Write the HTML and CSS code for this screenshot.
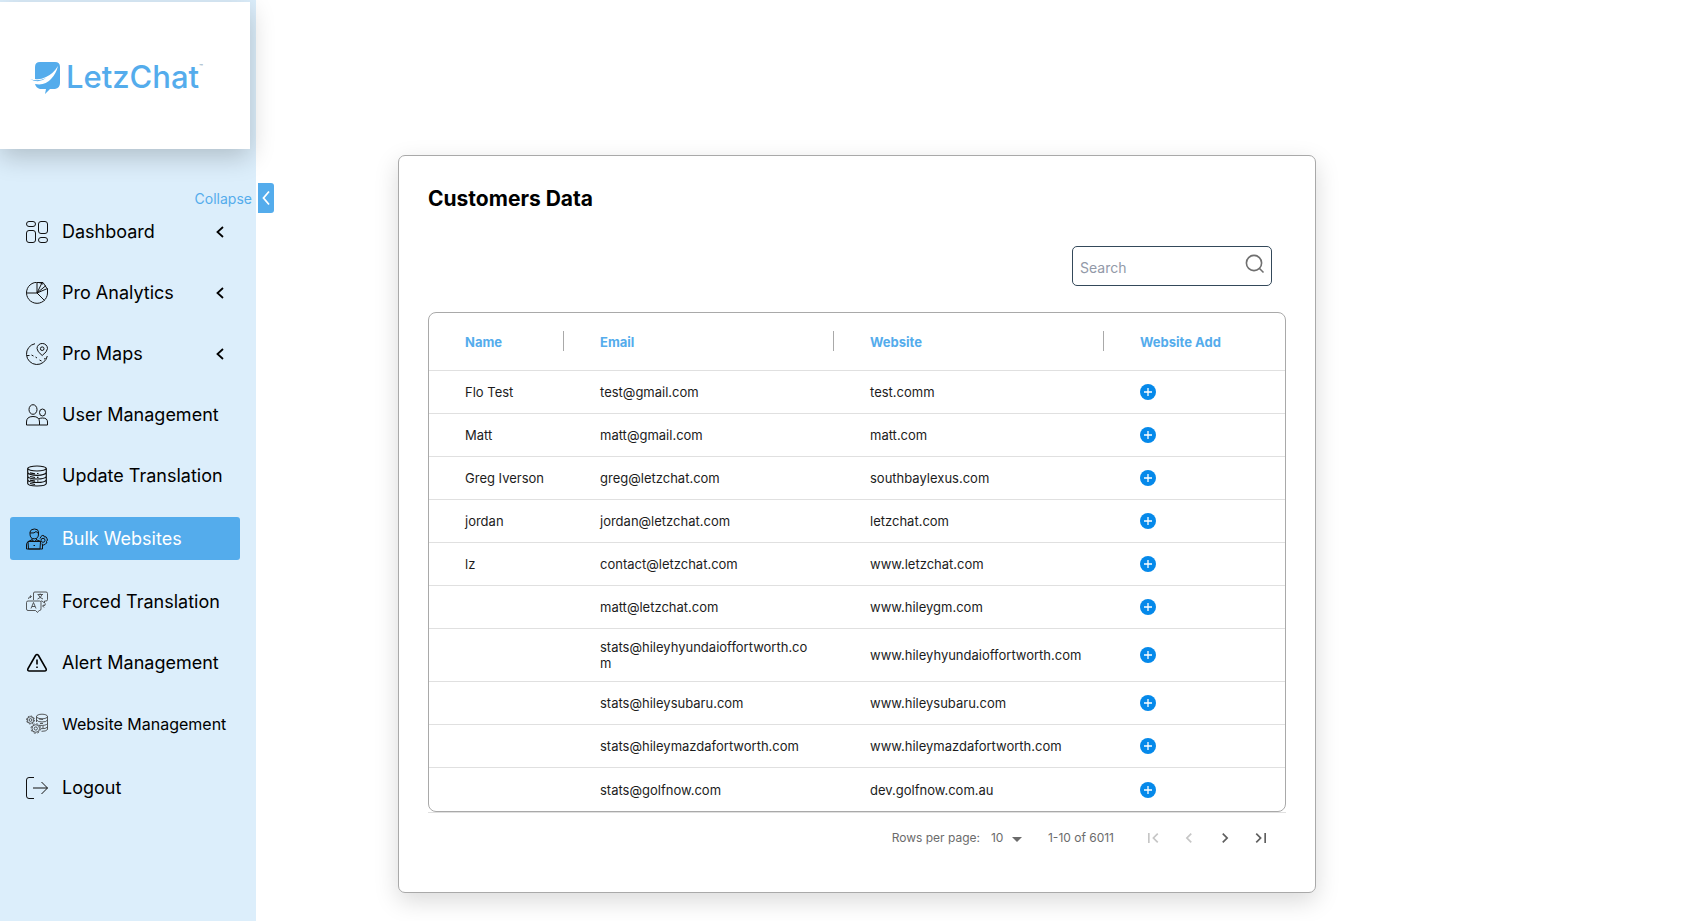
FILE: index.html
```html
<!DOCTYPE html>
<html lang="en">
<head>
    <meta charset="UTF-8">
    <meta name="viewport" content="width=device-width, initial-scale=1.0">
    <title>LetzChat - Customers Data</title>
    <link rel="stylesheet" href="styles.css">
</head>
<body>
    <aside class="sidebar">
        <div class="logo-box">
            <svg class="logo-mark" viewBox="0 0 31 33" aria-hidden="true">
                <path fill="#54acec" d="M10 0H25Q30 0 30 5V21Q30 26 25 27H20L15 32L16 27H10Q6 26 5 22Q15 24 21 17Q26 12 28 4Q23 12 16 15Q10 18 5 17V5Q5 0 10 0Z"/>
                <path fill="#54acec" d="M0 17Q8 20 16 16Q9 22 0 17Z"/>
            </svg>
            <span class="logo-text">LetzChat</span>
            <small class="logo-tm">™</small>
        </div>

        <div class="collapse-row">
            <span id="collapse-label">Collapse</span>
            <button class="btn-collapse" type="button" aria-labelledby="collapse-label">
                <svg viewBox="0 0 16 30" width="16" height="30"><path d="M11 8.500L5.500 15L11 21.500" fill="none" stroke="#fff" stroke-width="1.800"/></svg>
            </button>
        </div>

        <nav class="menu">
            <a href="#" class="menu-item">
                <svg class="menu-icon" viewBox="0 0 22 22">
                    <rect x=".5" y=".5" width="9" height="5" rx="2.500"/><rect x="12.500" y=".5" width="9" height="12" rx="2.500"/>
                    <rect x=".5" y="9.500" width="9" height="12" rx="2.500"/><rect x="12.500" y="16.500" width="9" height="5" rx="2.500"/>
                </svg>
                <span>Dashboard</span>
                <svg class="arrow" viewBox="0 0 8 12"><path d="M7 1L1.500 6L7 11"/></svg>
            </a>
            <a href="#" class="menu-item">
                <svg class="menu-icon" viewBox="0 0 22 22">
                    <path d="M17 2.200A10.500 10.500 0 1 0 21.500 11V6.500L11 11V.5H17L21 6.500M.5 11H11L18.500 18.500M11 11L16 .8M11 11L20 3.500"/>
                </svg>
                <span>Pro Analytics</span>
                <svg class="arrow" viewBox="0 0 8 12"><path d="M7 1L1.500 6L7 11"/></svg>
            </a>
            <a href="#" class="menu-item">
                <svg class="menu-icon" viewBox="0 0 22 22">
                    <path d="M9 .7A10.500 10.500 0 1 0 21.300 13"/>
                    <path d="M16.200 12.500Q11 8.500 11 5.500A5.200 5 0 0 1 21.500 5.500Q21.500 8.500 16.200 12.500Z"/>
                    <circle cx="16.200" cy="5.700" r="1.800"/>
                    <path d="M1 12.500H3.500M5.500 12L7.500 13M9.500 14L11 15M13.500 17L15.500 18M18 16L19.500 15.500"/>
                </svg>
                <span>Pro Maps</span>
                <svg class="arrow" viewBox="0 0 8 12"><path d="M7 1L1.500 6L7 11"/></svg>
            </a>
            <a href="#" class="menu-item">
                <svg class="menu-icon" viewBox="0 0 22 22">
                    <ellipse cx="7" cy="5.500" rx="4" ry="4.800"/><ellipse cx="16.500" cy="8.500" rx="3" ry="3.500"/>
                    <path d="M.5 21V18Q.5 12.500 7 12.500Q13.500 12.500 13.500 18V21ZM13 14.800Q14.500 14 16.500 14Q21.500 14 21.500 18V21H13.500"/>
                </svg>
                <span>User Management</span>
            </a>
            <a href="#" class="menu-item">
                <svg class="menu-icon icon-heavy" viewBox="0 0 22 22">
                    <ellipse cx="11" cy="3.500" rx="9.300" ry="2.500"/>
                    <path d="M1.700 3.500V18.500Q2 21 11 21Q20 21 20.300 18.500V3.500M1.700 7.500Q3 10.300 11 10.300Q19 10.300 20.300 7.500M1.700 11.500Q3 14 11 14Q19 14 20.300 11.500M1.700 15Q3 17.500 11 17.500Q19 17.500 20.300 15"/>
                    <path d="M4 7.800L9 8.800M4 11.500L9 12.500M4 15.200L9 16.200M4 18.500L9 19.500M11 8.500H12.500M11 12.300H12.500M11 16H12.500"/>
                </svg>
                <span>Update Translation</span>
            </a>
            <a href="#" class="menu-item active" aria-current="page">
                <svg class="menu-icon" viewBox="0 0 22 22">
                    <path d="M4 6V4Q4.500 1 8.500 1Q12.500 1 12.500 4V6Q12.500 10.800 8.300 10.800Q4 10.800 4 6ZM4 5Q9 5.500 10 3.500L12.500 5.500M6 10.500V12L8.300 13.500L10.500 12V10.500"/>
                    <path d="M.5 21V17Q.5 13 6 12M10.500 12Q14 12.500 15 14M2.500 21L2 13.500H14.500L14 21ZM.5 21H16.500V17M7.500 17.500H9"/>
                    <path d="M15 8.500L16.200 7.500H17.800L18.300 9L20 8.800L20.800 10.200L21.500 12L20.500 13.500L20.800 15L19.300 16L18 17H16.500L16 15.500M14 10.500L15 8.500"/>
                    <circle cx="17" cy="12.300" r="2"/>
                </svg>
                <span>Bulk Websites</span>
            </a>
            <a href="#" class="menu-item">
                <svg class="menu-icon icon-light" viewBox="0 0 22 22">
                    <path d="M7.500 9V2Q7.500 1 9 1H20Q21.500 1 21.500 2.500V8.500Q21.500 10 20 10H18.500V12L16 10H15"/>
                    <path d="M2 10H13.500Q15 10 15 11.500V18Q15 19.500 13.500 19.500H13L11.500 21.500L9.500 19.500H2Q.5 19.500 .5 18V11.500Q.5 10 2 10Z"/>
                    <path d="M5 17.500L7.500 11.500L10 17.500M6 15.500H9M11.500 3.500H17M14.200 2.500V3.500M16 3.500Q15 7 11.500 8M12.500 4Q13.500 7 17 8M2.500 8Q2.500 5.500 5 5.500M4 4.500L5.500 5.500L4 7M19.500 12.500Q19.500 15 17 15M18 13.500L16.500 15L18 16.500"/>
                </svg>
                <span>Forced Translation</span>
            </a>
            <a href="#" class="menu-item">
                <svg class="menu-icon icon-bold" viewBox="0 0 22 22">
                    <path d="M9.500 3.500Q11 1.500 12.500 3.500L20 16.500Q21 19 18.500 19H3.500Q1 19 2 16.500ZM11 7.500V12.500M11 14.500V16"/>
                </svg>
                <span>Alert Management</span>
            </a>
            <a href="#" class="menu-item menu-item-long">
                <svg class="menu-icon icon-light" viewBox="0 0 22 22">
                    <ellipse cx="16" cy="3.500" rx="5.500" ry="2.300"/>
                    <path d="M10.500 3.500V9M21.500 3.500V16.500Q20 18.500 15.500 18.300M10.500 7Q12 9 16 9Q20.500 9 21.500 7M13 12.300Q20 13 21.500 10.500M15 15.700Q20 16 21.500 14M13 6L17 6.500M14 10.500H17M16 14H18"/>
                    <circle cx="4.500" cy="7" r="3.300"/><circle cx="4.500" cy="7" r="1.400"/>
                    <circle cx="4.500" cy="7" r="4" stroke-dasharray="1.600 1.500"/>
                    <circle cx="9.800" cy="15.500" r="3.800"/><circle cx="9.800" cy="15.500" r="1.600"/>
                    <circle cx="9.800" cy="15.500" r="4.800" stroke-dasharray="2 1.770"/>
                </svg>
                <span>Website Management</span>
            </a>
            <a href="#" class="menu-item menu-item-logout">
                <svg class="menu-icon" viewBox="0 0 22 22">
                    <path d="M8 .5H3Q.5 .5 .5 3V19Q.5 21.500 3 21.500H8M7 11H21.500M15.500 5L21.500 11L15.500 17"/>
                </svg>
                <span>Logout</span>
            </a>
        </nav>
    </aside>

    <main class="content">
        <section class="card">
            <h1>Customers Data</h1>

            <form class="search-box" role="search">
                <input type="search" id="search" name="search" placeholder="Search" aria-label="Search">
                <button type="submit" aria-label="Submit search">
                    <svg viewBox="0 0 20 20" width="20" height="20"><circle cx="9" cy="9" r="7.600"/><path d="M14.500 14.500L18.500 18.500"/></svg>
                </button>
            </form>

            <div class="table-wrap">
                <table id="customers">
                    <thead>
                        <tr>
                            <th class="col-name">Name</th>
                            <th class="col-wide">Email</th>
                            <th class="col-wide">Website</th>
                            <th>Website Add</th>
                        </tr>
                    </thead>
                    <tbody></tbody>
                </table>
            </div>

            <footer class="pagination">
                <label for="rows">Rows per page:</label>
                <div class="select-wrap">
                    <select id="rows">
                        <option>10</option>
                        <option>25</option>
                        <option>50</option>
                    </select>
                    <svg viewBox="0 0 10 5" width="10" height="5"><path d="M0 0H10L5 5Z" fill="#6b6b6b"/></svg>
                </div>
                <span class="range">1-10 of 6011</span>
                <div class="pages">
                    <button type="button" aria-label="First page" disabled><svg viewBox="0 0 24 24"><path d="M18.410 16.590L13.820 12l4.590-4.590L17 6l-6 6 6 6zM6 6h2v12H6z"/></svg></button>
                    <button type="button" aria-label="Previous page" disabled><svg viewBox="0 0 24 24"><path d="M15.410 7.410L14 6l-6 6 6 6 1.410-1.410L10.830 12z"/></svg></button>
                    <button type="button" aria-label="Next page"><svg viewBox="0 0 24 24"><path d="M10 6L8.590 7.410 13.170 12l-4.580 4.590L10 18l6-6z"/></svg></button>
                    <button type="button" aria-label="Last page"><svg viewBox="0 0 24 24"><path d="M5.590 7.410L10.180 12l-4.590 4.590L7 18l6-6-6-6zM16 6h2v12h-2z"/></svg></button>
                </div>
            </footer>
        </section>
    </main>

<script src="script.js"></script>
</body>
</html>
```

FILE: styles.css
```css
*{
    padding: 0;
    margin: 0;
    box-sizing: border-box;
}
body{
    display: flex;
    min-height: 100vh;
    background-color: #fff;
    color: #000;
    font-family: Inter, "Liberation Sans", sans-serif;
}
button, input, select{
    font-family: inherit;
    border: none;
    background: none;
}
button{
    cursor: pointer;
}

/* sidebar */
.sidebar{
    flex: none;
    width: 256px;
    padding-top: 2px;
    background-color: #dceefb;
}
.logo-box{
    display: flex;
    align-items: center;
    width: 250px;
    height: 147px;
    padding: 5px 0 0 30px;
    background-color: #fff;
    box-shadow: 0 8px 24px rgba(0, 0, 0, .2);
}
.logo-mark{
    width: 31px;
    height: 33px;
}
.logo-text{
    margin: 0 0 4px 5px;
    color: #54acec;
    font-size: 31px;
    font-weight: 500;
}
.logo-tm{
    align-self: flex-start;
    margin-top: 56px;
    color: #6b8ca5;
    font-size: 6px;
}
.collapse-row{
    display: flex;
    align-items: center;
    justify-content: flex-end;
    gap: 6px;
    margin: 34px -18px 0 0;
    color: #54acec;
    font-size: 14px;
}
.btn-collapse{
    width: 16px;
    height: 30px;
    border-radius: 0 3px 3px 0;
    background-color: #54acec;
}
.btn-collapse svg{
    display: block;
}
.menu{
    display: flex;
    flex-direction: column;
    gap: 22px;
    margin-top: -1px;
    padding: 0 16px 0 10px;
}
.menu-item{
    display: flex;
    align-items: center;
    gap: 14px;
    height: 39px;
    padding: 0 16px;
    border-radius: 3px;
    color: #000;
    font-size: 18px;
    text-decoration: none;
    white-space: nowrap;
}
.menu-item.active{
    height: 43px;
    background-color: #54acec;
    color: #fff;
}
.menu-item-long{
    font-size: 16px;
}
.menu-item-logout{
    margin-top: 3px;
}
.menu-icon{
    flex: none;
    width: 22px;
    height: 22px;
    fill: none;
    stroke: #111;
}
.icon-light{
    stroke: #333;
    stroke-width: .8;
}
.icon-heavy{
    stroke-width: 1.2;
}
.icon-bold{
    stroke: #000;
    stroke-width: 1.6;
}
.arrow{
    width: 8px;
    height: 12px;
    margin-left: auto;
    fill: none;
    stroke: #000;
    stroke-width: 1.8;
}

/* content */
.content{
    flex: 1;
    min-width: 0;
    padding: 155px 371px 24px 142px;
}
.card{
    padding: 29px 29px 30px;
    border: 1px solid #a9a9a9;
    border-radius: 7px;
    background-color: #fff;
    box-shadow: 0 8px 24px rgba(0, 0, 0, .15);
}
.card h1{
    font-size: 21px;
    font-weight: 700;
    line-height: 28px;
}
.search-box{
    display: flex;
    align-items: center;
    width: 200px;
    height: 40px;
    margin: 33px 14px 26px auto;
    padding: 0 6px 0 7px;
    border: 1px solid #34495a;
    border-radius: 5px;
}
.search-box input{
    flex: 1;
    min-width: 0;
    height: 38px;
    padding-top: 2px;
    outline: none;
    font-size: 14px;
}
.search-box input::placeholder{
    color: #9299a8;
}
.search-box button{
    width: 20px;
    height: 24px;
    margin-bottom: 4px;
}
.search-box svg{
    display: block;
    fill: none;
    stroke: #6f6f6f;
    stroke-width: 1.6;
}

/* table */
.table-wrap{
    border: 1px solid #a9a9a9;
    border-radius: 8px;
}
#customers{
    width: 100%;
    border-collapse: separate;
    border-spacing: 0;
    table-layout: fixed;
    color: #1c1c1c;
    font-size: 13px;
    line-height: 16px;
}
#customers .col-name{
    width: 135px;
}
#customers .col-wide{
    width: 270px;
}
#customers th,
#customers td{
    padding: 0 20px 0 36px;
    border-bottom: 1px solid #e0e0e0;
    text-align: left;
    overflow-wrap: anywhere;
}
#customers th{
    position: relative;
    height: 58px;
    color: #54acec;
    font-weight: 700;
}
#customers .col-name,
#customers td:first-child{
    padding-right: 8px;
}
#customers th:not(:last-child)::after{
    content: "";
    position: absolute;
    top: 18px;
    right: 0;
    width: 1px;
    height: 20px;
    background-color: #a9a9a9;
}
#customers td{
    height: 43px;
    padding-top: 10px;
    padding-bottom: 10px;
}
#customers tr:last-child td{
    border-bottom: none;
}
.btn-add{
    display: block;
    width: 16px;
    height: 16px;
}
.btn-add svg{
    display: block;
}

/* pagination */
.pagination{
    display: flex;
    align-items: center;
    justify-content: flex-end;
    height: 50px;
    padding-right: 7px;
    border-top: 1px solid #e0e0e0;
    color: #6b6b6b;
    font-size: 12px;
}
.select-wrap{
    position: relative;
    margin: 0 26px 0 11px;
}
.select-wrap select{
    width: 31px;
    appearance: none;
    color: inherit;
    font-size: 12px;
}
.select-wrap svg{
    position: absolute;
    top: 7px;
    right: 0;
    pointer-events: none;
}
.pages{
    display: flex;
    margin-left: 21px;
}
.pages button{
    width: 36px;
    height: 36px;
    padding: 8px;
}
.pages svg{
    display: block;
    width: 20px;
    height: 20px;
    fill: #5f5f5f;
}
.pages button:disabled svg{
    fill: #c6c6c6;
}
```

FILE: script.js
```javascript
const customers = [
    ["Flo Test", "test@gmail.com", "test.comm"],
    ["Matt", "matt@gmail.com", "matt.com"],
    ["Greg Iverson", "greg@letzchat.com", "southbaylexus.com"],
    ["jordan", "jordan@letzchat.com", "letzchat.com"],
    ["lz", "contact@letzchat.com", "www.letzchat.com"],
    ["", "matt@letzchat.com", "www.hileygm.com"],
    ["", "stats@hileyhyundaioffortworth.com", "www.hileyhyundaioffortworth.com"],
    ["", "stats@hileysubaru.com", "www.hileysubaru.com"],
    ["", "stats@hileymazdafortworth.com", "www.hileymazdafortworth.com"],
    ["", "stats@golfnow.com", "dev.golfnow.com.au"]
];

const tbody = document.querySelector("#customers tbody");

customers.forEach((customer)=>{
    const row = tbody.insertRow();
    customer.forEach((text)=>{
        row.insertCell().textContent = text;
    });
    row.insertCell().innerHTML = `
        <button class="btn-add" type="button" aria-label="Add website">
            <svg viewBox="0 0 16 16" width="16" height="16">
                <circle cx="8" cy="8" r="8" fill="#0589ea"/>
                <path d="M8 4V12M4 8H12" stroke="#fff" stroke-width="1.300"/>
            </svg>
        </button>`;
});
```
